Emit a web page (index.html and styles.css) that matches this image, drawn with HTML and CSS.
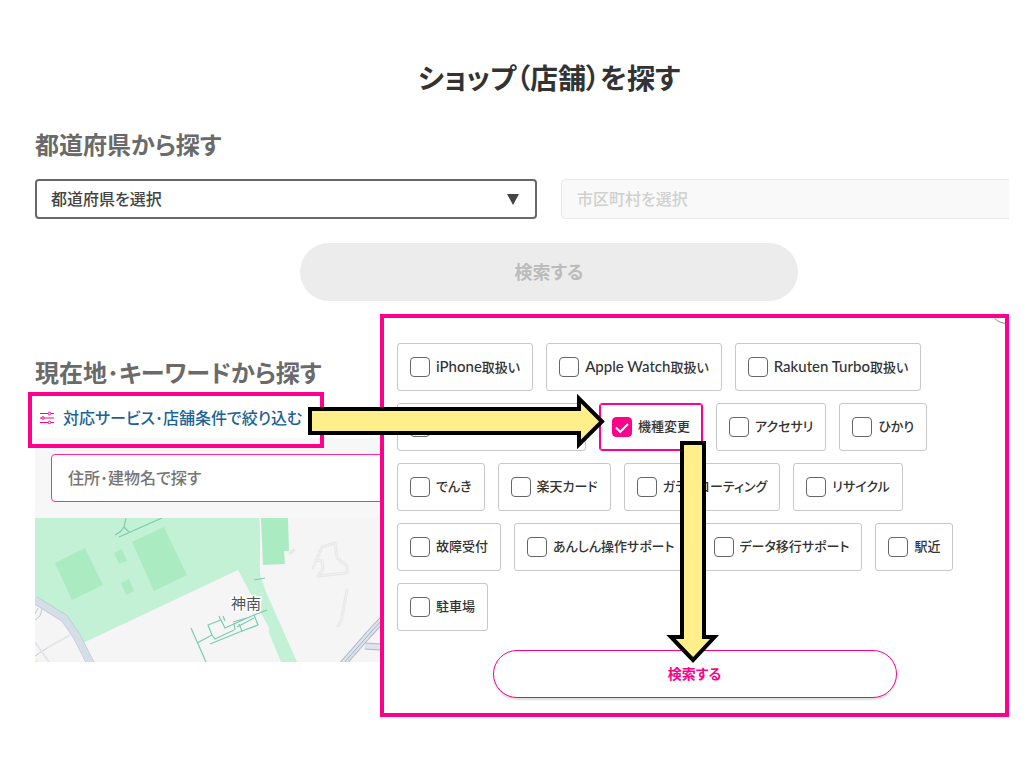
FILE: index.html
```html
<!DOCTYPE html>
<html lang="ja">
<head>
<meta charset="utf-8">
<meta name="viewport" content="width=device-width, initial-scale=1">
<title>ショップ（店舗）を探す</title>
<link rel="stylesheet" href="styles.css">
</head>
<body>
<main class="stage">
  <div class="page">
    <div class="content">
      <h1 class="title">ショップ（店舗）を探す</h1>

      <section>
        <h2 class="heading">都道府県から探す</h2>
        <form class="area-form">
          <div class="selects">
            <div class="select-wrap">
              <select class="select" aria-label="都道府県"><option>都道府県を選択</option></select>
            </div>
            <select class="select select-disabled" aria-label="市区町村" disabled><option>市区町村を選択</option></select>
          </div>
          <button class="search-disabled" type="button" disabled>検索する</button>
        </form>
      </section>

      <section class="keyword">
        <h2 class="heading">現在地･キーワードから探す</h2>
        <button class="filter-button" type="button">
          <svg class="filter-icon" width="14" height="14" viewBox="0 0 14 14" fill="none" stroke="#ff008c" aria-hidden="true">
            <path d="M0 2.500h8M11 2.500h3M0 7h1.500M4.500 7H14M0 11.500h8M11 11.500h3"/>
            <circle cx="9.500" cy="2.500" r="1.300"/><circle cx="3" cy="7" r="1.300"/><circle cx="9.500" cy="11.500" r="1.300"/>
          </svg>
          <span class="label">対応サービス･店舗条件で絞り込む</span>
        </button>
        <div class="map-box">
          <div class="map-search">
            <input class="map-input" type="text" placeholder="住所･建物名で探す" aria-label="住所･建物名">
          </div>
          <svg class="map" viewBox="0 0 1028 144" preserveAspectRatio="xMinYMin slice" role="img" aria-label="地図">
            <rect width="1028" height="144" fill="#f5f5f5"/>
            <path d="M0 0H225V56L231 74L262 144H246L234 115V110L203 52L48 125L31 98L0 80Z" fill="#c3f1d5"/>
            <path d="M225 0L227 60" stroke="#f5f5f5"/>
            <path d="M20 45L50 30L68 67L37 82ZM79 35L87 31L92 43L84 46ZM86 65L94 61L99 73L91 77ZM97 24L129 9L152 57L119 73ZM226 0H253L254 33H249L250 46L228 47Z" fill="#aaebc2"/>
            <g fill="none" stroke="#7bccb0" stroke-width="1.200">
              <path d="M91 0L89 9L85 14L80 17M89 9L94 14M84 19L127 0M219 62L230 60"/>
              <path d="M156 110L171 144M162 125L177 117M177 117L173 107L186 102L190 110L219 97L223 107L207 113L204 106M177 117L180 121L199 112M175 126L207 113M184 98L186 103M188 98L190 103M219 97L232 92M199 105L200 112M198 104L215 99M202 109L219 100"/>
            </g>
            <path d="M0 82L29 100L41 117L57 148" fill="none" stroke="#b9c2ce" stroke-width="8"/>
            <path d="M0 82L29 100L41 117L57 148" fill="none" stroke="#d5dde6" stroke-width="7"/>
            <g fill="none" stroke="#c2cad6">
              <path d="M7 91L5 98L0 102M3 90L0 96"/>
              <path d="M0 138L12 130"/>
              <path d="M0 124L14 144M12 130L35 117" stroke="#e3e5e8" stroke-width="2"/>
            </g>
            <g fill="none" stroke-linecap="round" stroke-linejoin="round">
              <path d="M278 50L287 29L300 25L302 40L312 48V55L283 58L288 51L287 43L281 42M312 72L306 103L303 108M255 35L259 32" stroke="#e8e8e8" stroke-width="3"/>
              <path d="M278 50L287 29L300 25L302 40L312 48V55L283 58L288 51L287 43L281 42M312 72L306 103L303 108" stroke="#f1f1f1"/>
            </g>
            <path d="M306 148L334 116L360 88M330 128L360 130" fill="none" stroke="#adb6c6" stroke-width="7"/>
            <path d="M306 148L334 116L360 88M330 128L360 130" fill="none" stroke="#dde4ed" stroke-width="5"/>
            <path d="M308 146L336 114L360 88" fill="none" stroke="#a9b2c1"/>
            <path d="M0 142H3V144H0Z" fill="#fae9b4"/>
            <text class="map-label" x="196" y="91">神南</text>
          </svg>
        </div>
      </section>
    </div>
  </div>

  <div class="highlight"></div>

  <section class="panel" aria-label="対応サービス･店舗条件">
    <button class="close" type="button" aria-label="閉じる"></button>
    <div class="chips">
      <label class="chip"><input class="check" type="checkbox"><span class="label"><span class="latin">iPhone</span>取扱い</span></label>
      <label class="chip"><input class="check" type="checkbox"><span class="label"><span class="latin">Apple Watch</span>取扱い</span></label>
      <label class="chip"><input class="check" type="checkbox"><span class="label"><span class="latin">Rakuten Turbo</span>取扱い</span></label>
      <label class="chip chip-wide"><input class="check" type="checkbox" aria-label="サービス"></label>
      <label class="chip chip-on"><input class="check" type="checkbox" checked><span class="label">機種変更</span></label>
      <label class="chip"><input class="check" type="checkbox"><span class="label">アクセサリ</span></label>
      <label class="chip"><input class="check" type="checkbox"><span class="label">ひかり</span></label>
      <label class="chip"><input class="check" type="checkbox"><span class="label">でんき</span></label>
      <label class="chip"><input class="check" type="checkbox"><span class="label">楽天カード</span></label>
      <label class="chip"><input class="check" type="checkbox"><span class="label">ガラスコーティング</span></label>
      <label class="chip"><input class="check" type="checkbox"><span class="label">リサイクル</span></label>
      <label class="chip"><input class="check" type="checkbox"><span class="label">故障受付</span></label>
      <label class="chip"><input class="check" type="checkbox"><span class="label">あんしん操作サポート</span></label>
      <label class="chip"><input class="check" type="checkbox"><span class="label">データ移行サポート</span></label>
      <label class="chip"><input class="check" type="checkbox"><span class="label">駅近</span></label>
      <label class="chip"><input class="check" type="checkbox"><span class="label">駐車場</span></label>
    </div>
    <button class="search" type="button">検索する</button>
  </section>

  <svg class="arrow arrow-right" width="298" height="58" viewBox="0 0 298 58" aria-hidden="true">
    <path d="M2 16H271V5.500L294 28.500L271 51.500V40H2Z"/>
  </svg>
  <svg class="arrow arrow-down" width="56" height="224" viewBox="0 0 56 224" aria-hidden="true">
    <path d="M17 2H39V196H49.500L28 219L6 196H17Z"/>
  </svg>
</main>
</body>
</html>
```
FILE: styles.css
```css
* {
  box-sizing: border-box;
}

body {
  margin: 0;
  background: #fff;
  color: #333;
  font-family: Lato, "Noto Sans CJK JP", sans-serif;
  font-feature-settings: "palt";
}

button,
input,
select {
  font-family: inherit;
  font-feature-settings: inherit;
}

.stage {
  position: relative;
  min-height: 768px;
}

/* The content runs past the right edge of the page and is cut there. */
.page {
  margin: 0 15px 0 35px;
  overflow: hidden;
}

.content {
  margin-right: -54px;
  padding-top: 57px;
}

.title {
  margin: 0 0 28px;
  font-size: 28px;
  line-height: 42px;
  text-align: center;
}

.heading {
  margin: 0;
  color: #6a6a6a;
  font-size: 24px;
  line-height: 36px;
}

.label {
  padding-bottom: 2px;
}

.latin {
  font-size: 15px;
}

.selects {
  display: grid;
  grid-template-columns: 1fr 1fr;
  gap: 24px;
  margin: 16px 0 24px;
}

.select-wrap {
  position: relative;
}

.select-wrap::after {
  content: "";
  position: absolute;
  top: 15px;
  right: 18px;
  width: 12px;
  height: 11px;
  background: #444;
  clip-path: polygon(0 0, 100% 0, 50% 100%);
  pointer-events: none;
}

.select {
  width: 100%;
  height: 40px;
  padding: 0 14px 2px;
  border: 2px solid #686868;
  border-radius: 4px;
  background: #fff;
  color: #444;
  font-size: 16px;
  font-weight: 500;
  appearance: none;
}

.select-disabled {
  padding: 0 15px 2px;
  border: 1px solid #e8e8e8;
  background: #f9f9f9;
  color: #d0d0d0;
  opacity: 1;
}

.search-disabled {
  display: block;
  width: 498px;
  height: 58px;
  margin: 0 auto;
  padding: 0 0 2px;
  border: 0;
  border-radius: 30px;
  background: #ececec;
  color: #bbb;
  font-size: 18px;
  font-weight: 700;
}

.keyword {
  margin-top: 54px;
}

.filter-button {
  display: flex;
  align-items: center;
  gap: 9px;
  height: 40px;
  margin-top: 7px;
  padding: 0 5px;
  border: 0;
  background: none;
  color: #1a6396;
  font-size: 16px;
  font-weight: 500;
}

.map-box {
  background: #f7f7f7;
}

.map-search {
  padding: 16px;
}

.map-input {
  display: block;
  width: 100%;
  height: 48px;
  padding: 0 16px 2px;
  border: 1px solid #ff2a9d;
  border-radius: 4px;
  background: #fff;
  font-size: 16px;
  font-weight: 500;
}

.map-input::placeholder {
  color: #757575;
}

.map {
  display: block;
  width: 100%;
  height: 144px;
}

.map-label {
  fill: #50545a;
  stroke: #fff;
  stroke-width: 3px;
  paint-order: stroke;
  font-size: 15px;
}

.highlight {
  position: absolute;
  top: 392px;
  left: 28px;
  width: 296px;
  height: 56px;
  border: 4px solid #ff008c;
  pointer-events: none;
}

.panel {
  position: absolute;
  top: 314px;
  right: 15px;
  left: 380px;
  padding: 25px 13px 15px;
  overflow: hidden;
  border: 4px solid #ff008c;
  background: #fff;
}

.close {
  position: absolute;
  top: -30px;
  right: -20px;
  width: 36px;
  height: 36px;
  border: 1px solid #888;
  border-radius: 50%;
  background: #fff;
}

.chips {
  display: flex;
  flex-wrap: wrap;
  gap: 12px 13px;
}

.chip {
  display: flex;
  align-items: center;
  gap: 6px;
  height: 48px;
  padding: 0 12px;
  border: 1px solid #c8c8c8;
  border-radius: 3px;
  font-size: 13px;
  font-weight: 500;
  line-height: 20px;
  white-space: nowrap;
}

.chip-wide {
  width: 189px;
}

.chip-on {
  border-color: #ff008c;
  outline: 1px solid #ff008c;
  outline-offset: -2px;
}

.check {
  flex: none;
  width: 20px;
  height: 20px;
  margin: 0;
  border: 1px solid #666;
  border-radius: 4px;
  background: #fff;
  appearance: none;
}

.check:checked {
  display: grid;
  place-items: center;
  border-color: #ff008c;
  background: #ff008c;
}

.check:checked::before {
  content: "";
  width: 10px;
  height: 5px;
  margin-bottom: 2px;
  border-bottom: 2px solid #fff;
  border-left: 2px solid #fff;
  transform: rotate(-45deg);
}

.search {
  display: block;
  width: 404px;
  height: 48px;
  margin: 19px auto 0;
  padding: 0 0 2px;
  border: 1px solid #ff008c;
  border-radius: 24px;
  background: #fff;
  box-shadow: 0 2px 2px #ddd;
  color: #ff008c;
  font-size: 14px;
  font-weight: 700;
}

.arrow {
  position: absolute;
  overflow: visible;
  fill: #ffef8b;
  stroke: #000;
  stroke-width: 4px;
  pointer-events: none;
}

.arrow-right {
  top: 393px;
  left: 308px;
}

.arrow-down {
  top: 441px;
  left: 665px;
}
```
